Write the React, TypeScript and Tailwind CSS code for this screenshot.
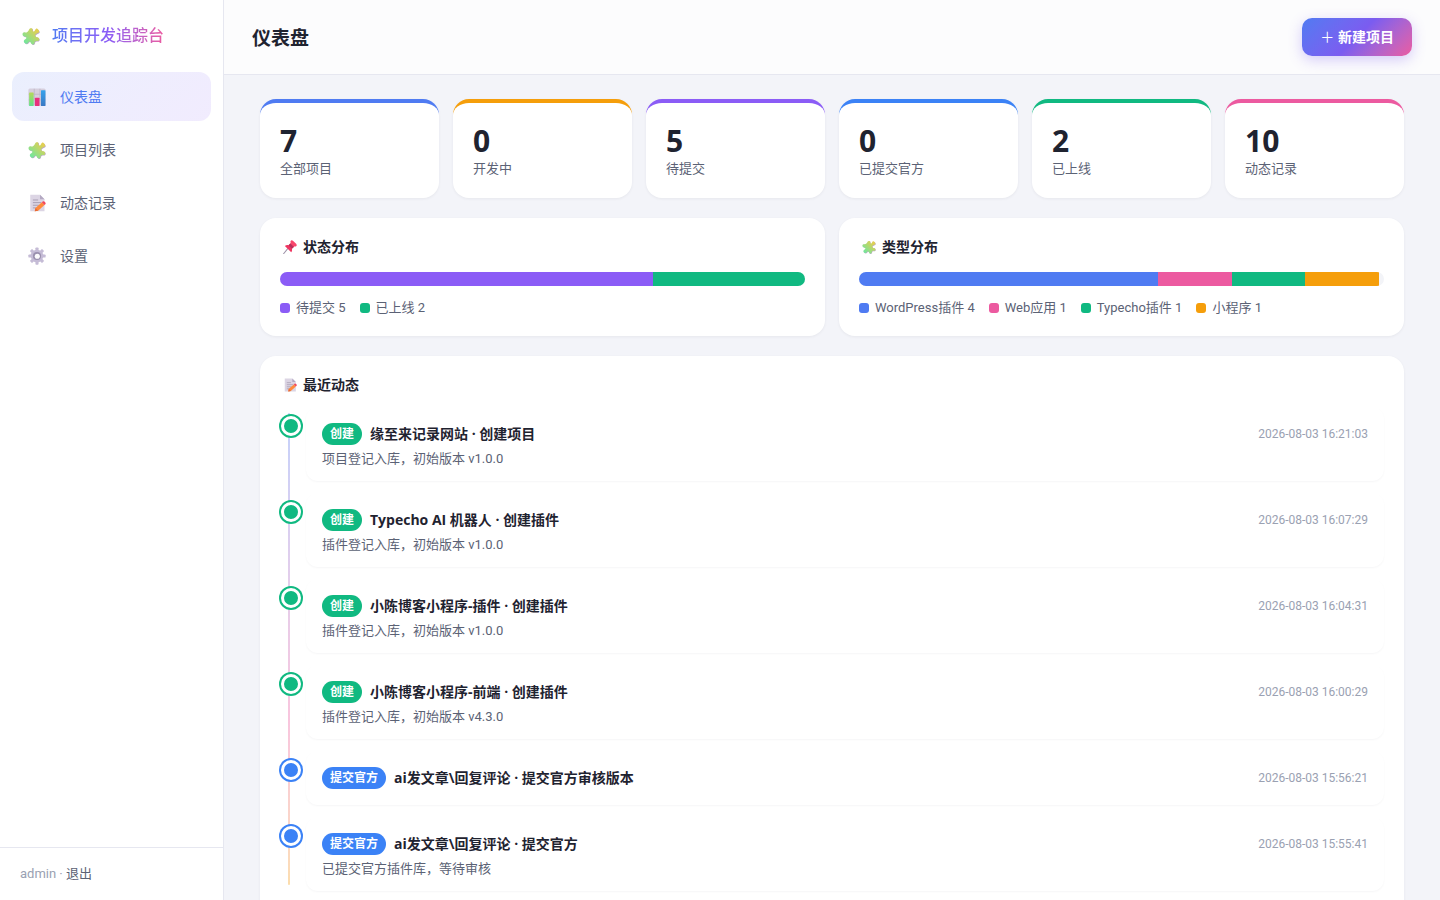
import { useState } from 'react'
import type { ReactNode } from 'react'

interface Segment {
  name: string
  count: number
  percent: number
  color: string
}

interface Activity {
  type: 'create' | 'submit'
  title: string
  note?: string
  time: string
}

const stats = [
  { value: 7, label: '全部项目', border: 'border-[#4f7bf2]' },
  { value: 0, label: '开发中', border: 'border-[#f59e0b]' },
  { value: 5, label: '待提交', border: 'border-[#8b5cf6]' },
  { value: 0, label: '已提交官方', border: 'border-[#3b82f6]' },
  { value: 2, label: '已上线', border: 'border-[#10b981]' },
  { value: 10, label: '动态记录', border: 'border-[#ec5aa0]' },
]

const statusSegments: Segment[] = [
  { name: '待提交', count: 5, percent: 71, color: 'bg-[#8b5cf6]' },
  { name: '已上线', count: 2, percent: 29, color: 'bg-[#10b981]' },
]

const typeSegments: Segment[] = [
  { name: 'WordPress插件', count: 4, percent: 57, color: 'bg-[#4f7bf2]' },
  { name: 'Web应用', count: 1, percent: 14, color: 'bg-[#ec5aa0]' },
  { name: 'Typecho插件', count: 1, percent: 14, color: 'bg-[#10b981]' },
  { name: '小程序', count: 1, percent: 14, color: 'bg-[#f59e0b]' },
]

const activities: Activity[] = [
  { type: 'create', title: '缘至来记录网站 · 创建项目', note: '项目登记入库，初始版本 v1.0.0', time: '2026-08-03 16:21:03' },
  { type: 'create', title: 'Typecho AI 机器人 · 创建插件', note: '插件登记入库，初始版本 v1.0.0', time: '2026-08-03 16:07:29' },
  { type: 'create', title: '小陈博客小程序-插件 · 创建插件', note: '插件登记入库，初始版本 v1.0.0', time: '2026-08-03 16:04:31' },
  { type: 'create', title: '小陈博客小程序-前端 · 创建插件', note: '插件登记入库，初始版本 v4.3.0', time: '2026-08-03 16:00:29' },
  { type: 'submit', title: 'ai发文章\\回复评论 · 提交官方审核版本', time: '2026-08-03 15:56:21' },
  { type: 'submit', title: 'ai发文章\\回复评论 · 提交官方', note: '已提交官方插件库，等待审核', time: '2026-08-03 15:55:41' },
]

const activityTypes = {
  create: { label: '创建', bg: 'bg-[#10b981]', ring: 'ring-[#10b981]' },
  submit: { label: '提交官方', bg: 'bg-[#3b82f6]', ring: 'ring-[#3b82f6]' },
}

const puzzlePath =
  'M9.5 3.2C10.5 1 14 1 14 3.5c0 1.500.5 3 2 2.500C17.500 5.500 17 3 18.800 2.200c1.700-.4 4.700 2.800 4 4.600-.8 1.700-4.300 1.700-5.300 3.700-.5 2 1.500 3 3.500 3.300 2.500.7 2.500 4.200.5 4.700-2 .3-3.500-.5-4.500 1-.5 1.500-.5 3.500-2.500 3.800-2.500.2-2.500-3.300-4-4-2-.3-2.500 3.200-5 3-2-.3-3.500-2.500-3-4C3.200 16.500 6 16 6 14 5.500 12 1.500 13 .8 10.500.3 8 2 6.500 4 7.300 6 8 8.500 5.500 9.500 3.200z'

function PuzzleIcon({ className }: { className: string }) {
  return (
    <svg viewBox="0 0 24 24" className={className} aria-hidden="true">
      <defs>
        <linearGradient id="puzzle" x1="0" y1="1" x2="1" y2="0">
          <stop offset="0.15" stopColor="#74e69a" />
          <stop offset="0.85" stopColor="#e2cf52" />
        </linearGradient>
      </defs>
      <path d={puzzlePath} fill="#b9a9c4" transform="translate(0.7 0.7)" />
      <path d={puzzlePath} fill="url(#puzzle)" />
    </svg>
  )
}

function ChartIcon({ className }: { className: string }) {
  return (
    <svg viewBox="0 0 24 24" className={className} aria-hidden="true">
      <defs>
        <linearGradient id="barGreen" x1="0" y1="0" x2="0" y2="1">
          <stop stopColor="#b5d957" />
          <stop offset="1" stopColor="#5fe08c" />
        </linearGradient>
        <linearGradient id="barBlue" x1="0" y1="0" x2="0" y2="1">
          <stop stopColor="#35a2ec" />
          <stop offset="1" stopColor="#3a78c4" />
        </linearGradient>
      </defs>
      <rect x="0.5" y="0.5" width="23" height="23" rx="2" fill="#d6cfdd" />
      <path d="M8.3 1v22M15.9 1v22M1 8.3h22M1 15.9h22" stroke="#bcb3c6" strokeWidth="1" />
      <rect x="1.5" y="6" width="6" height="18" rx="0.8" fill="url(#barGreen)" />
      <rect x="9.3" y="13" width="6" height="11" rx="0.8" fill="#e8307c" />
      <rect x="17.3" y="3" width="6" height="21" rx="0.8" fill="url(#barBlue)" />
    </svg>
  )
}

function MemoIcon({ className }: { className: string }) {
  return (
    <svg viewBox="0 0 24 24" className={className} aria-hidden="true">
      <path d="M3 1h13l6 6v16H3z" fill="#dcd5e4" />
      <path d="M16 1l6 6h-6z" fill="#b4a9c2" />
      <path d="M6.5 8h7M6.5 11.5h11M6.5 15h8M6.5 18.5h5" stroke="#a79db3" strokeWidth="1.3" />
      <path d="M9 23l1-4.5L18.5 11l3.4 3.7-8.4 7.5z" fill="#ff8a3c" />
      <path d="M18.5 11l1.5-1.3c1.5-.8 4.2 1.8 3.4 3.5l-1.5 1.5z" fill="#f3485c" />
      <path d="M9 23l1-4.5 3.5 3.7z" fill="#e86a35" />
    </svg>
  )
}

function GearIcon({ className }: { className: string }) {
  return (
    <svg viewBox="0 0 24 24" className={className} aria-hidden="true">
      <g fill="#c5bcd6">
        {[0, 45, 90, 135].map((angle) => (
          <rect key={angle} x="9.9" y="0.5" width="4.2" height="23" rx="1.2" transform={`rotate(${angle} 12 12)`} />
        ))}
        <circle cx="12" cy="12" r="8.4" />
      </g>
      <circle cx="12" cy="12" r="5.4" fill="#9a90ae" />
      <circle cx="12.4" cy="12.4" r="3.4" fill="#fbfafc" />
    </svg>
  )
}

function PinIcon({ className }: { className: string }) {
  return (
    <svg viewBox="0 0 24 24" className={className} aria-hidden="true">
      <path d="M1 23.5L9.5 13" stroke="#9d93a8" strokeWidth="1.8" strokeLinecap="round" />
      <path d="M3.2 10.2c2-1.6 4.5-1.8 6.3-1.2L13.3 5l6 6-4 3.8c.6 2 .3 4.4-1.2 6.2z" fill="#ef3560" />
      <path d="M13 1.6c1-1.8 3-1.3 4.5 0l5 5c1.3 1.5 1.5 3.3 0 4.2-2.2 1-5 .2-7-2s-3.3-5-2.5-7.2z" fill="#f8466b" />
      <path d="M12.5 6l6 5.8-3.2 3L9.5 9z" fill="#b8315c" />
    </svg>
  )
}

const navItems = [
  { id: 'dashboard', label: '仪表盘', Icon: ChartIcon },
  { id: 'projects', label: '项目列表', Icon: PuzzleIcon },
  { id: 'logs', label: '动态记录', Icon: MemoIcon },
  { id: 'settings', label: '设置', Icon: GearIcon },
]

function Panel({ title, icon, children }: { title: string; icon: ReactNode; children: ReactNode }) {
  return (
    <section className="rounded-2xl bg-white px-5 py-[18px] shadow-[0_1px_3px_rgba(31,35,48,0.06)]">
      <h2 className="flex items-center gap-1 text-sm leading-[22px] font-bold">
        <span className="flex w-[19px] justify-center">{icon}</span>
        {title}
      </h2>
      {children}
    </section>
  )
}

function Distribution({ segments }: { segments: Segment[] }) {
  return (
    <>
      <div className="mt-3.5 flex h-3.5 overflow-hidden rounded-full bg-[#f3f4f8]">
        {segments.map((s) => (
          <div key={s.name} className={s.color} style={{ width: `${s.percent}%` }} />
        ))}
      </div>
      <ul className="mt-3 flex flex-wrap gap-x-3.5 text-[13px] leading-5 text-[#5b6275]">
        {segments.map((s) => (
          <li key={s.name} className="flex items-center gap-1.5">
            <span className={`size-2.5 rounded-[3px] ${s.color}`} />
            {s.name} {s.count}
          </li>
        ))}
      </ul>
    </>
  )
}

export default function App() {
  const [page, setPage] = useState('dashboard')

  return (
    <div className="flex min-h-screen bg-[#f3f4f9] font-['Roboto','Noto_Sans_CJK_SC',sans-serif] text-[#1f2330]">
      {/* Sidebar */}
      <aside className="sticky top-0 flex h-screen w-56 shrink-0 flex-col border-r border-[#e6e7f0] bg-white">
        <div className="flex h-[72px] items-center gap-3 px-[22px]">
          <PuzzleIcon className="size-[18px]" />
          <span className="bg-linear-to-r from-[#4f7bf2] via-[#8b5cf6] to-[#ec5aa0] bg-clip-text text-base font-medium text-transparent">
            项目开发追踪台
          </span>
        </div>
        <nav className="flex flex-1 flex-col gap-1 px-3">
          {navItems.map(({ id, label, Icon }) => (
            <a
              key={id}
              href={`#${id}`}
              onClick={() => setPage(id)}
              className={`flex h-[49px] items-center gap-3.5 rounded-xl px-4 text-sm ${
                page === id
                  ? 'bg-linear-135 from-[#4f7bf2]/12 to-[#8b5cf6]/12 text-[#4f7bf2]'
                  : 'text-[#5b6275] hover:bg-gray-50'
              }`}
            >
              <Icon className="size-[18px]" />
              {label}
            </a>
          ))}
        </nav>
        <div className="border-t border-[#e6e7f0] px-5 py-4 text-[13px] leading-5 text-[#9aa1b2]">
          admin · <a href="#logout" className="text-[#5b6275]">退出</a>
        </div>
      </aside>

      <div className="min-w-0 flex-1">
        {/* Top bar */}
        <header className="sticky top-0 z-10 flex items-center justify-between border-b border-[#e6e7f0] bg-[#fcfcfd] px-7 py-[18px]">
          <h1 className="pt-1 text-[19px] leading-7 font-bold">仪表盘</h1>
          <button
            type="button"
            className="h-[38px] rounded-[10px] bg-linear-135 from-[#4f7bf2] via-[#7b5cf0] to-[#ec5aa0] px-[18px] font-['Open_Sans','Noto_Sans_CJK_SC',sans-serif] text-sm font-bold text-white shadow-[0_4px_14px_rgba(123,92,240,0.3)]"
          >
            <span className="font-normal">＋</span> 新建项目
          </button>
        </header>

        <main className="px-9 py-6">
          {/* Stats */}
          <div className="grid grid-cols-6 gap-3.5">
            {stats.map((s) => (
              <div
                key={s.label}
                className={`rounded-2xl border-t-4 bg-white p-5 shadow-[0_1px_3px_rgba(31,35,48,0.06)] ${s.border}`}
              >
                <div className="font-['Open_Sans',sans-serif] text-[30px] leading-9 font-bold">{s.value}</div>
                <div className="text-[13px] leading-[19px] text-[#5b6275]">{s.label}</div>
              </div>
            ))}
          </div>

          <div className="my-5 grid grid-cols-2 gap-3.5">
            <Panel title="状态分布" icon={<PinIcon className="size-3.5" />}>
              <Distribution segments={statusSegments} />
            </Panel>
            <Panel title="类型分布" icon={<PuzzleIcon className="size-3.5" />}>
              <Distribution segments={typeSegments} />
            </Panel>
          </div>

          {/* Timeline */}
          <Panel title="最近动态" icon={<MemoIcon className="size-3.5" />}>
            <div className="relative mt-[11px] mb-3">
              <div className="absolute top-1.5 bottom-1.5 left-2 w-0.5 rounded-full bg-linear-to-b from-[#4f7bf2] via-[#ec5aa0] via-65% to-[#f59e0b] opacity-35" />
              <ul className="relative flex flex-col gap-3">
                {activities.map((a) => {
                  const type = activityTypes[a.type]
                  return (
                    <li key={a.time} className="flex gap-1">
                      <div className="flex w-[22px] shrink-0 justify-center pt-[9px]">
                        <span className={`size-5 rounded-full border-3 border-white ring-2 ${type.bg} ${type.ring}`} />
                      </div>
                      <div
                        className={`flex-1 rounded-xl px-4 pt-4 shadow-[0_1px_2px_rgba(31,35,48,0.04)] ${
                          a.note ? 'pb-3.5' : 'pb-4'
                        }`}
                      >
                        <div className="flex items-center gap-2">
                          <span className={`rounded-full px-2 text-xs leading-[22px] font-bold text-white ${type.bg}`}>
                            {type.label}
                          </span>
                          <h3 className="font-['Open_Sans','Noto_Sans_CJK_SC',sans-serif] text-sm leading-[22px] font-bold">
                            {a.title}
                          </h3>
                          <time className="ml-auto text-xs text-[#9aa1b2]">{a.time}</time>
                        </div>
                        {a.note && <p className="mt-1.5 text-[13px] leading-4 text-[#5b6275]">{a.note}</p>}
                      </div>
                    </li>
                  )
                })}
              </ul>
            </div>
          </Panel>
        </main>
      </div>
    </div>
  )
}
